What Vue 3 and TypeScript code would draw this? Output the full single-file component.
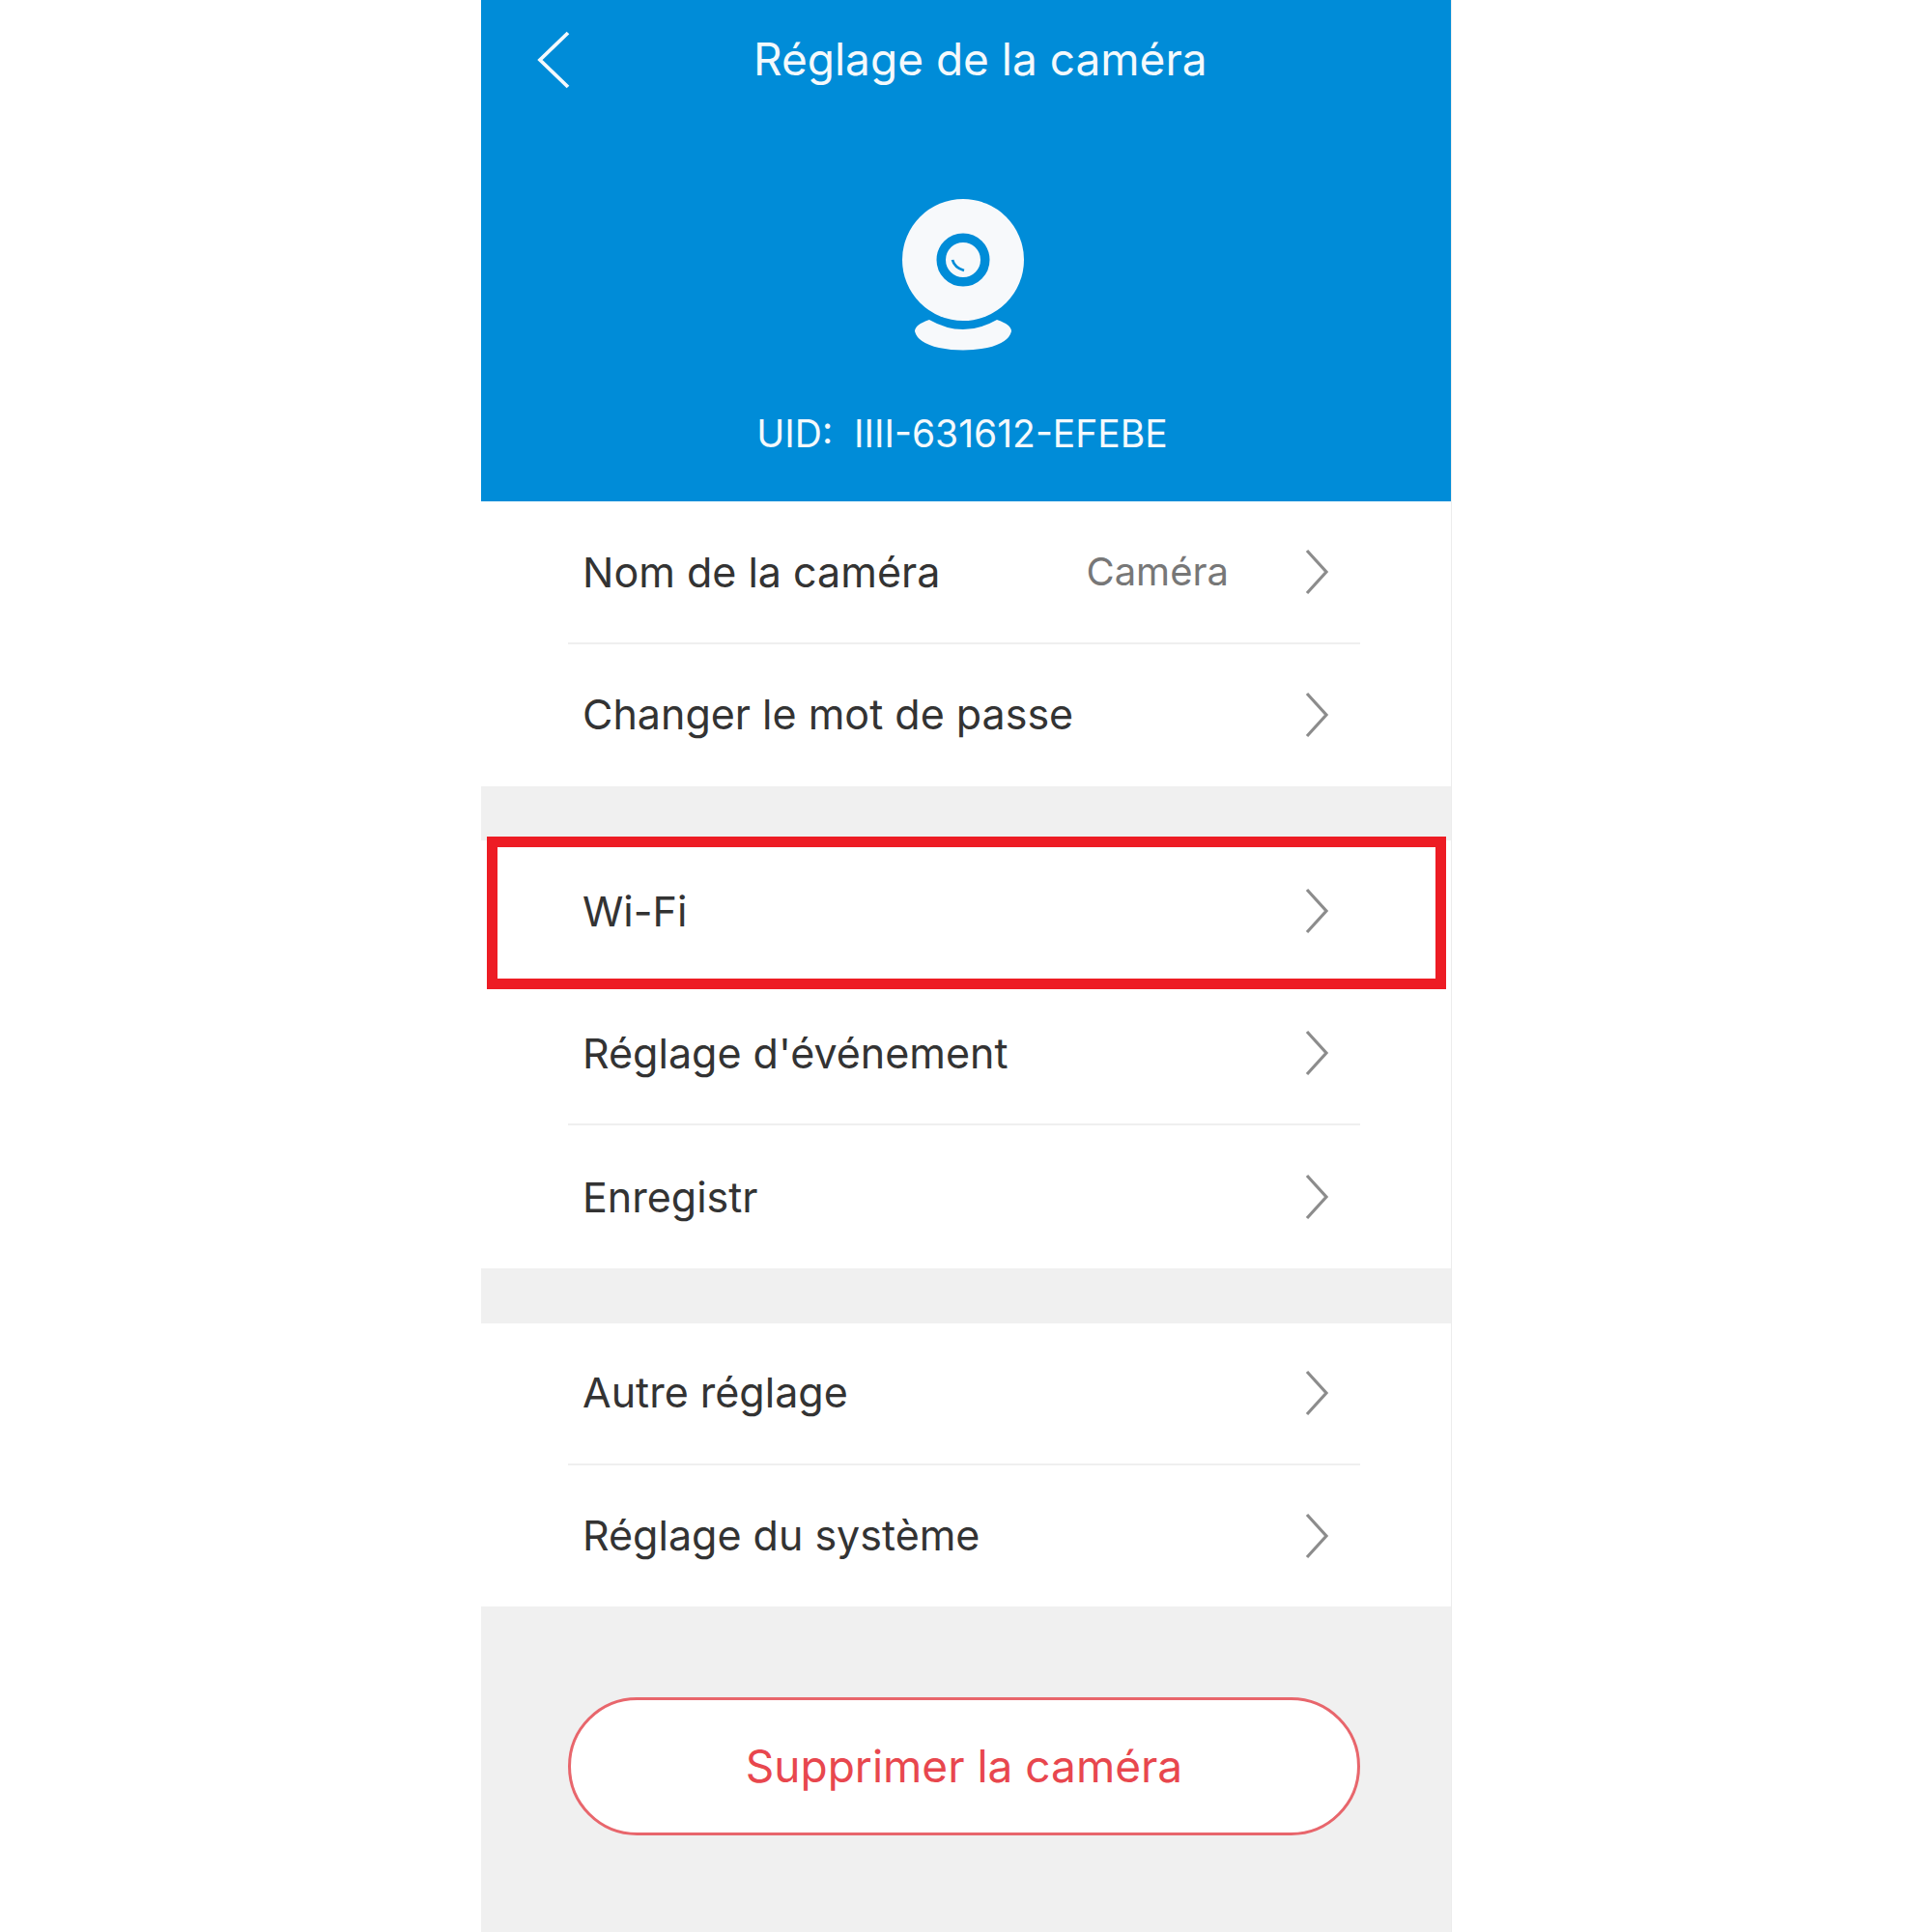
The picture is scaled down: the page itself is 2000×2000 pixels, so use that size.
<script setup lang="ts">
interface Row { label: string; value?: string }
const groupOne: Row[] = [
  { label: 'Nom de la caméra', value: 'Caméra' },
  { label: 'Changer le mot de passe' },
]
const groupTwo: Row[] = [
  { label: 'Wi-Fi' },
  { label: "Réglage d'événement" },
  { label: 'Enregistr' },
]
const groupThree: Row[] = [
  { label: 'Autre réglage' },
  { label: 'Réglage du système' },
]
const groups = [
  { id: 'one', rows: groupOne, flagged: false },
  { id: 'two', rows: groupTwo, flagged: true },
  { id: 'three', rows: groupThree, flagged: false },
]
</script>

<template>
  <main class="page">
    <div class="phone">
      <header class="head">
        <div class="topbar">
          <svg class="back" width="34" height="60" viewBox="0 0 34 60" aria-hidden="true">
            <path d="M32 2 L3 30 L32 58" fill="none" stroke="#f4f9fc" stroke-width="3.8" />
          </svg>
          <h1 class="title">Réglage de la caméra</h1>
        </div>
        <svg class="cam" width="130" height="164" viewBox="0 0 130 164" aria-hidden="true">
          <circle cx="65" cy="64" r="63" fill="#f7f9fb" />
          <circle cx="65" cy="64" r="22.75" fill="none" stroke="#008cd8" stroke-width="9.5" />
          <path d="M54 64 Q56 72 66 75" fill="none" stroke="#008cd8" stroke-width="2.8" />
          <path d="M30 126 Q65 146 100 126 Q115 131 115 138 Q112 150 90 155 Q65 160 40 155 Q18 150 15 138 Q15 131 30 126 Z" fill="#f7f9fb" />
        </svg>
        <p class="uid">UID:&nbsp; IIII-631612-EFEBE</p>
      </header>

      <section v-for="g in groups" :key="g.id" class="group" :class="'group-' + g.id">
        <div v-if="g.flagged" class="flag"></div>
        <div v-for="r in g.rows" :key="r.label" class="row">
          <span class="label">{{ r.label }}</span>
          <span v-if="r.value" class="value">{{ r.value }}</span>
          <svg class="chev" width="26" height="48" viewBox="0 0 26 48" aria-hidden="true">
            <path d="M3 2 L23 24 L3 46" fill="none" stroke="#8c8c8c" stroke-width="3.2" />
          </svg>
        </div>
      </section>

      <div class="foot">
        <button class="del" type="button">Supprimer la caméra</button>
      </div>
    </div>
  </main>
</template>

<style>
html, body { margin: 0; background: #fff; }
</style>

<style scoped>
.page {
  width: 2000px;
  height: 2000px;
  display: flex;
  justify-content: center;
  background: #fff;
  font-family: Inter, "Liberation Sans", sans-serif;
}
.phone {
  width: 1004px;
  height: 2000px;
  background: #f0f0f0;
  box-shadow: 1px 0 0 #ececec;
  display: flex;
  flex-direction: column;
}
.head {
  background: #008cd8;
  height: 519px;
  box-sizing: border-box;
  color: #f4f9fc;
  display: flex;
  flex-direction: column;
  flex: none;
}
.topbar {
  height: 124px;
  flex: none;
  display: flex;
  align-items: center;
  padding-left: 58px;
  gap: 190px;
}
.title {
  margin: 0 0 2px;
  font-size: 46px;
  font-weight: 400;
  white-space: nowrap;
}
.cam {
  align-self: center;
  margin: 81px 6px 0 0;
  flex: none;
}
.uid {
  margin: 55px 8px 0 0;
  text-align: center;
  font-size: 39px;
  line-height: 50px;
  white-space: nowrap;
}
.group {
  background: #fff;
  position: relative;
  flex: none;
}
.group-two { margin-top: 56px; }
.group-three { margin-top: 57.5px; }
.row {
  height: 147.5px;
  box-sizing: border-box;
  margin: 0 94px 0 90px;
  padding: 0 32px 0 15px;
  display: flex;
  align-items: center;
  border-bottom: 2px solid #efefef;
}
.group-three .row { height: 146.5px; }
.row:last-child { border-bottom: 0; }
.group-two .row:first-of-type { border-bottom: 0; }
.label {
  flex: 1;
  font-size: 43px;
  color: #333;
  white-space: nowrap;
}
.group-one .row:last-child .label,
.group-three .label { margin-bottom: 2px; }
.value {
  font-size: 40px;
  color: #777;
  margin-right: 78px;
}
.chev { flex: none; }
.flag {
  position: absolute;
  left: 6px;
  top: -4px;
  width: 993px;
  height: 158px;
  box-sizing: border-box;
  border: 11px solid #ed1c24;
  pointer-events: none;
}
.foot {
  padding: 94px 94px 0 90px;
}
.del {
  display: block;
  width: 100%;
  height: 143px;
  box-sizing: border-box;
  background: #fff;
  border: 3px solid #e8666c;
  border-radius: 72px;
  color: #e8474e;
  font-family: inherit;
  font-size: 46px;
  padding: 0 0 2px;
}
</style>
